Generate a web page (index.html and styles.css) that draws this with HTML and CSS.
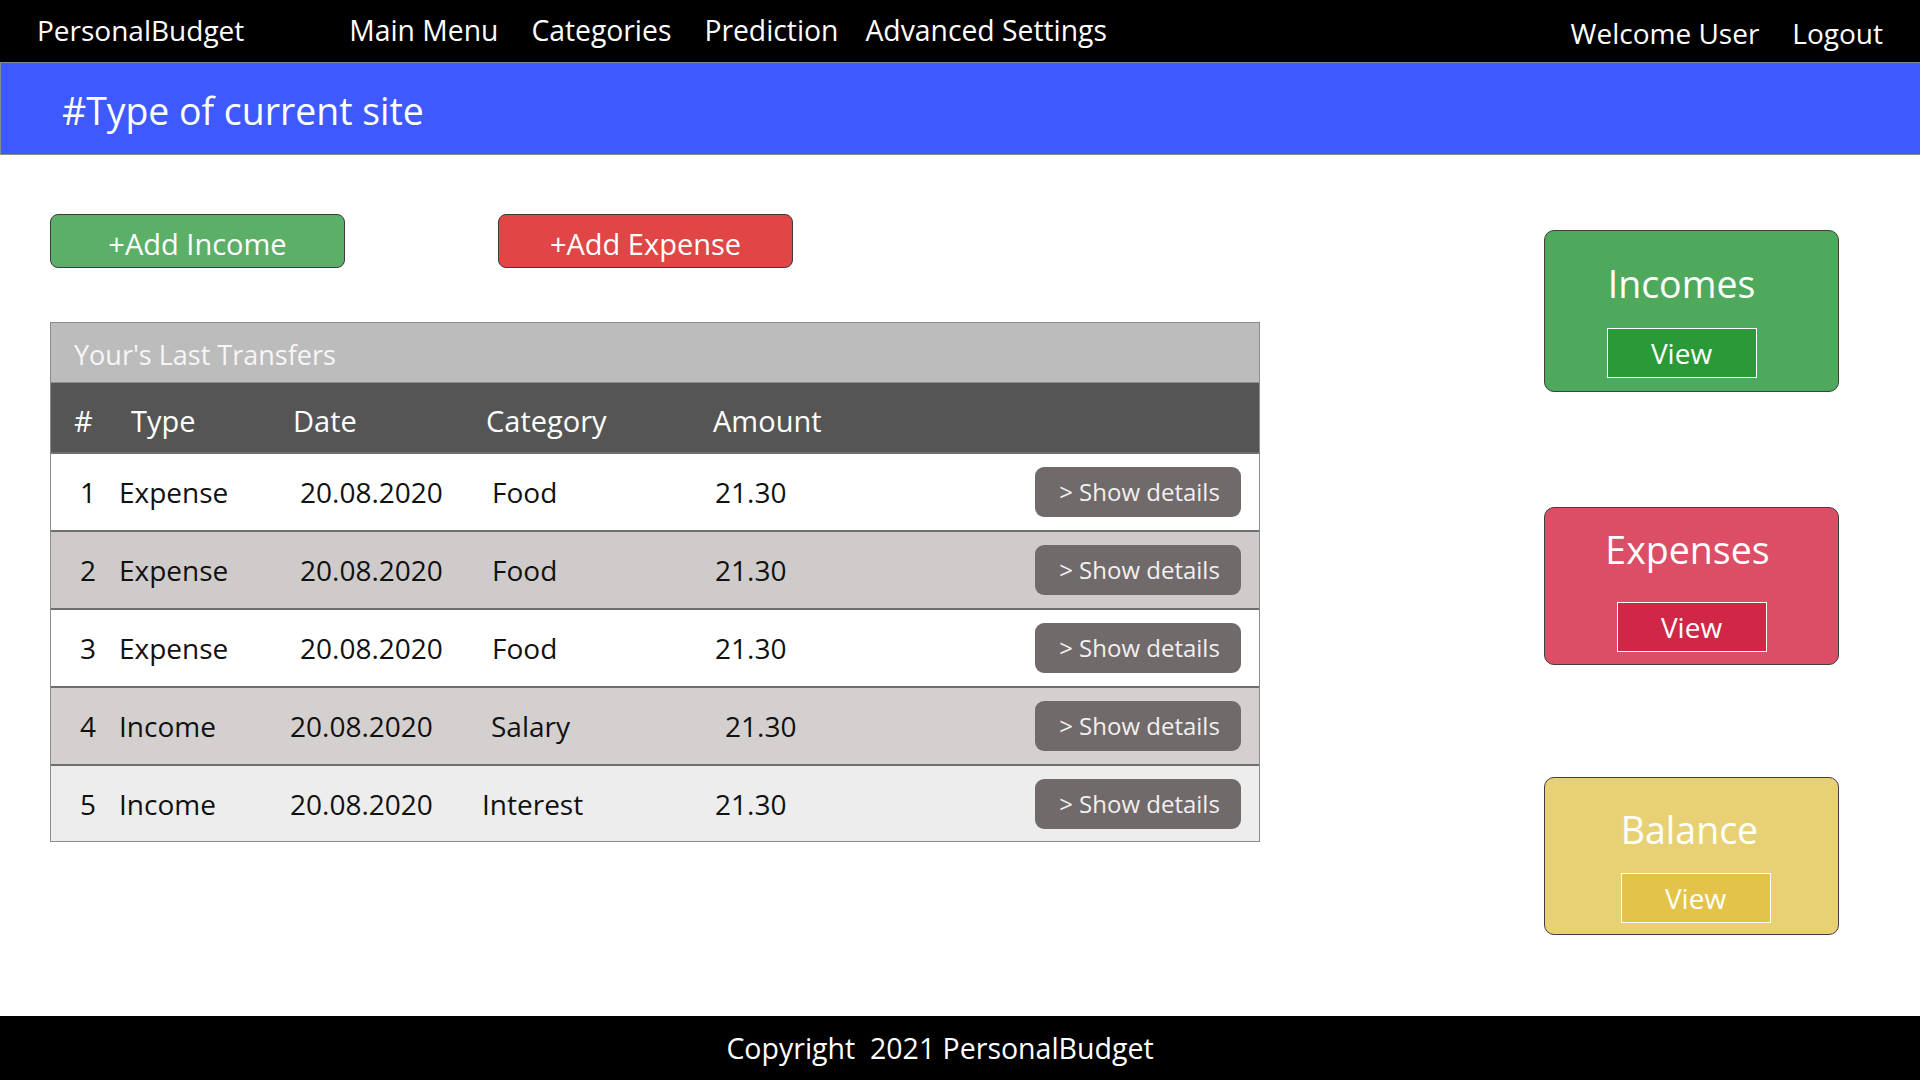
FILE: index.html
```html
<!DOCTYPE html>
<html lang="en">
<head>
<meta charset="utf-8">
<title>PersonalBudget</title>
<link rel="stylesheet" href="styles.css">
</head>
<body>
<nav class="topnav">
  <div class="nav-left">
    <span class="brand">PersonalBudget</span>
    <ul class="menu">
      <li>Main Menu</li>
      <li>Categories</li>
      <li>Prediction</li>
      <li>Advanced Settings</li>
    </ul>
  </div>
  <ul class="nav-right">
    <li>Welcome User</li>
    <li>Logout</li>
  </ul>
</nav>
<header class="page-header">
  <h1>#Type of current site</h1>
</header>
<main class="content">
  <section class="left">
    <div class="actions">
      <button class="btn btn-income">+Add Income</button>
      <button class="btn btn-expense">+Add Expense</button>
    </div>
    <div class="transfers">
      <div class="transfers-title">Your's Last Transfers</div>
      <div class="thead">
        <span>#</span><span>Type</span><span>Date</span><span>Category</span><span>Amount</span>
      </div>
      <div class="row row-white">
        <span>1</span><span>Expense</span><span>20.08.2020</span><span>Food</span><span>21.30</span>
        <button class="details">&gt; Show details</button>
      </div>
      <div class="row row-gray">
        <span>2</span><span>Expense</span><span>20.08.2020</span><span>Food</span><span>21.30</span>
        <button class="details">&gt; Show details</button>
      </div>
      <div class="row row-white">
        <span>3</span><span>Expense</span><span>20.08.2020</span><span>Food</span><span>21.30</span>
        <button class="details">&gt; Show details</button>
      </div>
      <div class="row row-gray2 row-income">
        <span>4</span><span>Income</span><span>20.08.2020</span><span class="cat-salary">Salary</span><span class="amt-shift">21.30</span>
        <button class="details">&gt; Show details</button>
      </div>
      <div class="row row-light row-income last">
        <span>5</span><span>Income</span><span>20.08.2020</span><span class="cat-interest">Interest</span><span>21.30</span>
        <button class="details">&gt; Show details</button>
      </div>
    </div>
  </section>
  <aside class="cards">
    <div class="card card-green">
      <div class="card-title">Incomes</div>
      <button class="view">View</button>
    </div>
    <div class="card card-red">
      <div class="card-title">Expenses</div>
      <button class="view">View</button>
    </div>
    <div class="card card-yellow">
      <div class="card-title">Balance</div>
      <button class="view">View</button>
    </div>
  </aside>
</main>
<footer class="footer">Copyright&nbsp; 2021 PersonalBudget</footer>
</body>
</html>
```
FILE: styles.css
```css
* { box-sizing: border-box; }
html, body {
  margin: 0;
  padding: 0;
  width: 1920px;
  height: 1080px;
  overflow: hidden;
  background: #ffffff;
  font-family: "Open Sans", "Noto Sans", sans-serif;
}
body {
  display: flex;
  flex-direction: column;
}
ul { list-style: none; margin: 0; padding: 0; }
button { font-family: inherit; cursor: pointer; }

.topnav {
  height: 63px;
  background: #000;
  border-bottom: 1px solid #8a8a8a;
  display: flex;
  align-items: center;
  justify-content: space-between;
  padding: 0 37px 0 37px;
  color: #fff;
  font-size: 28px;
  flex: none;
}
.nav-left { display: flex; align-items: center; padding-bottom: 2px; }
.brand { line-height: 40px; }
.menu { display: flex; margin-left: 105px; }
.menu li { line-height: 40px; font-size: 28.3px; }
.menu li + li { margin-left: 33px; }
.menu li:last-child { margin-left: 27px; }
.nav-right { display: flex; gap: 33px; padding-top: 3px; }
.nav-right li { line-height: 40px; }

.page-header {
  height: 92px;
  background: #3e5afe;
  border-bottom: 1px solid #8a8a8a;
  border-left: 1px solid #8a8a8a;
  display: flex;
  align-items: center;
  padding-left: 61px;
  padding-top: 5px;
  flex: none;
}
.page-header h1 {
  margin: 0;
  font-weight: 400;
  font-size: 37.4px;
  color: #fff;
  line-height: 50px;
}

.content {
  flex: 1;
  display: flex;
  justify-content: space-between;
  padding: 0 81px 0 50px;
}
.left { width: 1210px; padding-top: 59px; }
.actions { display: flex; gap: 153px; }
.btn {
  width: 295px;
  height: 54px;
  border: 1px solid #3c3c3c;
  border-radius: 8px;
  color: #fff;
  font-size: 29px;
  padding: 6px 0 0;
  line-height: 46px;
}
.btn-income { background: #5caf69; }
.btn-expense { background: #e04646; }

.transfers {
  margin-top: 54px;
  border: 1px solid #8c8c8c;
}
.transfers-title {
  height: 60px;
  background: #bcbcbc;
  color: #f6f6f6;
  font-size: 27px;
  line-height: 54px;
  padding-top: 5px;
  padding-left: 23px;
  border-bottom: 1px solid #8f8f8f;
}
.thead {
  height: 69px;
  background: #555555;
  color: #fff;
  font-size: 29px;
  display: grid;
  grid-template-columns: 57px 162px 193px 227px 1fr;
  align-items: center;
  padding-left: 23px;
  padding-top: 5px;
}
.row {
  height: 78px;
  display: grid;
  grid-template-columns: 39px 181px 192px 223px 1fr auto;
  align-items: center;
  padding: 0 18px 0 29px;
  font-size: 28px;
  color: #111;
  border-top: 2px solid #6e6e6e;
}
.row-white { background: #ffffff; }
.row-gray { background: #cfcbca; }
.row-gray2 { background: #d3d0cf; }
.row-light { background: #ededed; }
.row-income { grid-template-columns: 39px 171px 202px 223px 1fr auto; }
.row .cat-salary { margin-left: -1px; }
.row .cat-interest { margin-left: -10px; }
.row .amt-shift { margin-left: 10px; }
.last { height: 77px; }

.details {
  width: 206px;
  height: 50px;
  background: #716a6a;
  color: #f2f0f0;
  border: none;
  border-radius: 9px;
  font-size: 24px;
  padding: 0 0 0 3px;
  line-height: 48px;
}

.cards {
  width: 295px;
  padding-top: 75px;
  display: flex;
  flex-direction: column;
}
.card {
  border: 1px solid #3f3f3f;
  border-radius: 10px;
  display: flex;
  flex-direction: column;
  align-items: center;
}
.card-title {
  font-size: 37.5px;
  color: #fff;
  line-height: 44px;
}
.view {
  width: 150px;
  height: 50px;
  border: 1px solid #fff;
  color: #fff;
  font-size: 28px;
  line-height: 46px;
  padding: 0;
}
.card-green {
  background: #4fa95c;
  height: 162px;
  padding-top: 31px;
}
.card-green .card-title { margin-right: 20px; }
.card-green .view { background: #2a9938; margin-top: 22px; margin-right: 20px; }
.card-red {
  background: #db4e66;
  height: 158px;
  margin-top: 115px;
  padding-top: 20px;
}
.card-red .card-title { margin-right: 8px; }
.card-red .view { background: #d12746; margin-top: 30px; }
.card-yellow {
  background: #e8d174;
  height: 158px;
  margin-top: 112px;
  padding-top: 30px;
}
.card-yellow .card-title { margin-right: 4px; }
.card-yellow .view { background: #e3c34a; margin-top: 21px; margin-left: 8px; }

.footer {
  height: 64px;
  flex: none;
  background: #000;
  color: #fff;
  font-size: 28.5px;
  display: flex;
  align-items: center;
  justify-content: center;
  padding-right: 40px;
}
```
